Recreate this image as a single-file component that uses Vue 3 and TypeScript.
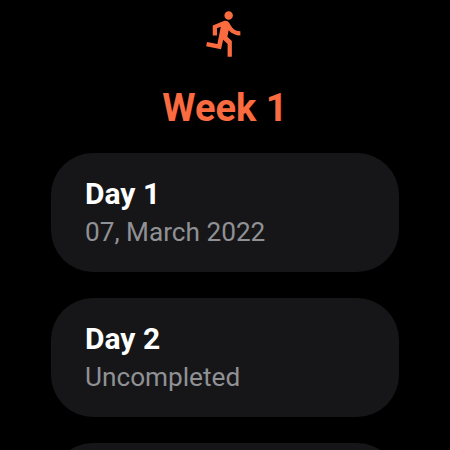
<script setup lang="ts">
interface Day {
  title: string
  status: string
}

const days: Day[] = [
  { title: 'Day 1', status: '07, March 2022' },
  { title: 'Day 2', status: 'Uncompleted' },
]
</script>

<template>
  <main class="screen">
    <svg class="runner" viewBox="0 0 24 24" aria-hidden="true">
      <path d="M13.49 5.48c1.1 0 2-.9 2-2s-.9-2-2-2-2 .9-2 2 .9 2 2 2zm-3.6 13.9l1-4.4 2.1 2v6h2v-7.5l-2.1-2 .6-3c1.3 1.5 3.3 2.5 5.5 2.5v-2c-1.9 0-3.5-1-4.3-2.4l-1-1.6c-.4-.6-1-1-1.7-1-.3 0-.5.1-.8.1l-5.2 2.2v4.7h2v-3.4l1.8-.7-1.6 8.1-4.9-1-.4 2 7 1.4z" />
    </svg>
    <h1 class="week">Week 1</h1>
    <section class="days">
      <article v-for="day in days" :key="day.title" class="card">
        <h2 class="title">{{ day.title }}</h2>
        <p class="status">{{ day.status }}</p>
      </article>
      <article class="card" />
    </section>
  </main>
</template>

<style>
html,
body {
  background: #000;
  overflow: hidden;
}
</style>

<style scoped>
.screen {
  box-sizing: border-box;
  width: 450px;
  height: 450px;
  padding-top: 8px;
  overflow: hidden;
  display: flex;
  flex-direction: column;
  align-items: center;
  background: #000;
  font-family: Roboto, sans-serif;
}
.runner {
  flex: none;
  width: 51px;
  height: 51px;
  margin-left: 1px;
  fill: #fb6b40;
}
.week {
  flex: none;
  margin: 27px 0 0;
  font-size: 38px;
  line-height: 45px;
  font-weight: 700;
  color: #fb6b40;
}
.days {
  flex: none;
  width: 348px;
  margin-top: 22px;
  display: flex;
  flex-direction: column;
  gap: 26px;
}
.card {
  box-sizing: border-box;
  height: 119px;
  padding: 23px 34px;
  border-radius: 42px;
  background: #161618;
}
.title {
  margin: 0;
  font-size: 30px;
  line-height: 36px;
  font-weight: 700;
  color: #fff;
}
.status {
  margin: 4px 0 0;
  font-size: 26.2px;
  line-height: 32px;
  color: #909195;
}
</style>
